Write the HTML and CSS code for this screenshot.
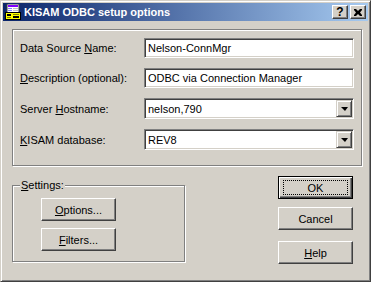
FILE: index.html
```html
<!DOCTYPE html>
<html lang="en">
<head>
    <meta charset="UTF-8">
    <title>KISAM ODBC setup options</title>
    <link rel="stylesheet" href="styles.css">
</head>
<body>
    <div class="window">
        <div class="titlebar">
            <svg class="app-icon" width="16" height="16" viewBox="0 0 16 16">
                <rect x="2" y="0" width="12" height="9" fill="#fff" stroke="#404040" stroke-width="1"/>
                <rect x="3" y="1" width="10" height="2" fill="#8000ff"/>
                <rect x="3" y="4" width="4" height="1" fill="#8080ff"/>
                <rect x="8" y="4" width="5" height="1" fill="#c0c0c0"/>
                <rect x="3" y="6" width="4" height="1" fill="#8080ff"/>
                <rect x="8" y="6" width="5" height="1" fill="#c0c0c0"/>
                <rect x="0.5" y="8.5" width="15" height="7" fill="#ffff00" stroke="#000" stroke-width="1"/>
                <rect x="2" y="10" width="4" height="2" fill="#000"/>
                <rect x="8" y="10" width="6" height="1" fill="#808000"/>
                <rect x="2" y="13" width="4" height="1" fill="#808000"/>
                <rect x="8" y="12" width="6" height="2" fill="#000"/>
            </svg>
            <span class="title">KISAM ODBC setup options</span>
            <div class="caption-buttons">
                <div class="cap-btn help">?</div>
                <div class="cap-btn">
                    <svg width="8" height="7" viewBox="0 0 8 7">
                        <path d="M0 0h2l2 2 2-2h2v1l-2 2.5 2 2.5v1h-2l-2-2-2 2h-2v-1l2-2.5-2-2.5z" fill="#000"/>
                    </svg>
                </div>
            </div>
        </div>

        <div class="client">
            <div class="group main-group">
                <div class="row">
                    <span class="label">Data Source <u>N</u>ame:</span>
                    <div class="edit">Nelson-ConnMgr</div>
                </div>
                <div class="row">
                    <span class="label"><u>D</u>escription (optional):</span>
                    <div class="edit">ODBC via Connection Manager</div>
                </div>
                <div class="row row-combo">
                    <span class="label">Server <u>H</u>ostname:</span>
                    <div class="edit combo">
                        <span class="combo-text">nelson,790</span>
                        <span class="drop-btn"><span class="arrow"></span></span>
                    </div>
                </div>
                <div class="row row-last">
                    <span class="label"><u>K</u>ISAM database:</span>
                    <div class="edit combo">
                        <span class="combo-text">REV8</span>
                        <span class="drop-btn"><span class="arrow"></span></span>
                    </div>
                </div>
            </div>

            <div class="lower">
                <div class="group settings">
                    <span class="group-label"><u>S</u>ettings:</span>
                    <div class="btn"><span><u>O</u>ptions...</span></div>
                    <div class="btn"><span><u>F</u>ilters...</span></div>
                </div>
                <div class="actions">
                    <div class="btn default"><span class="focus">OK</span></div>
                    <div class="btn btn-cancel"><span>Cancel</span></div>
                    <div class="btn btn-help"><span><u>H</u>elp</span></div>
                </div>
            </div>
        </div>
    </div>
</body>
</html>
```

FILE: styles.css
```css
* { margin: 0; padding: 0; box-sizing: border-box; }
body { background: #d4d0c8; font-family: 'Liberation Sans', Arial, sans-serif; font-size: 11px; color: #000; }
u { text-decoration: underline; text-underline-offset: 1px; }

.window {
    width: 371px; height: 282px; background: #d4d0c8; padding: 2px;
    border: 1px solid; border-color: #d4d0c8 #404040 #404040 #d4d0c8;
    box-shadow: inset 1px 1px 0 #fff, inset -1px -1px 0 #808080;
}

/* caption */
.titlebar {
    height: 18px; display: flex; align-items: center; padding: 0 2px;
    background: linear-gradient(to right, #0a246a, #a6caf0);
}
.app-icon { flex: none; display: block; }
.title { color: #fff; font-weight: 700; font-size: 11px; margin-left: 3px; }
.caption-buttons { margin-left: auto; display: flex; gap: 2px; }
.cap-btn {
    width: 16px; height: 14px; display: flex; align-items: center; justify-content: center;
    background: #d4d0c8; border: 1px solid; border-color: #fff #404040 #404040 #fff;
    box-shadow: inset -1px -1px 0 #808080; font-weight: 700; font-size: 12px;
}
.cap-btn.help { padding-bottom: 1px; }

.client { padding: 8px 0 0 9px; }

/* etched group box */
.group {
    position: relative; border: 1px solid #808080;
    box-shadow: 1px 1px 0 #fff, inset 1px 1px 0 #fff;
}
.main-group { width: 350px; height: 137px; padding: 8px 0 0 7px; }
.row { display: flex; align-items: center; height: 20px; margin-bottom: 10px; }
.row-combo { height: 21px; margin-top: 2px; }
.row-last { height: 21px; }
.label { width: 124px; flex: none; }

.edit {
    width: 210px; height: 100%; background: #fff; display: flex; align-items: center; padding: 0 3px;
    border: 1px solid; border-color: #808080 #fff #fff #808080;
    box-shadow: inset 1px 1px 0 #404040, inset -1px -1px 0 #d4d0c8;
    white-space: nowrap;
}
.combo { padding-right: 1px; }
.combo-text { flex: 1; }
.drop-btn {
    width: 16px; height: 17px; flex: none; display: flex; align-items: center; justify-content: center;
    background: #d4d0c8; border: 1px solid; border-color: #d4d0c8 #404040 #404040 #d4d0c8;
    box-shadow: inset 1px 1px 0 #fff, inset -1px -1px 0 #808080;
}
.arrow { width: 0; height: 0; border-left: 4px solid transparent; border-right: 3px solid transparent; border-top: 4px solid #000; margin-left: 1px; }

/* bottom part */
.lower { display: flex; align-items: flex-start; margin-top: 10px; }
.settings { width: 173px; height: 77px; margin-top: 9px; padding: 12px 0 0 28px; display: flex; flex-direction: column; gap: 7px; }
.group-label { position: absolute; top: -7px; left: 7px; padding: 0 1px; background: #d4d0c8; line-height: 13px; }
.actions { margin-left: 93px; display: flex; flex-direction: column; }

.btn {
    width: 75px; height: 23px; display: flex; align-items: center; justify-content: center;
    background: #d4d0c8; border: 1px solid; border-color: #fff #404040 #404040 #fff;
    box-shadow: inset -1px -1px 0 #808080;
}
.btn.default { border: 1px solid #000; box-shadow: inset 1px 1px 0 #fff, inset -1px -1px 0 #404040, inset -2px -2px 0 #808080; }
.focus { width: 65px; height: 15px; border: 1px dotted #000; display: flex; align-items: center; justify-content: center; }
.btn-cancel { margin-top: 8px; }
.btn-help { margin-top: 11px; }
```
